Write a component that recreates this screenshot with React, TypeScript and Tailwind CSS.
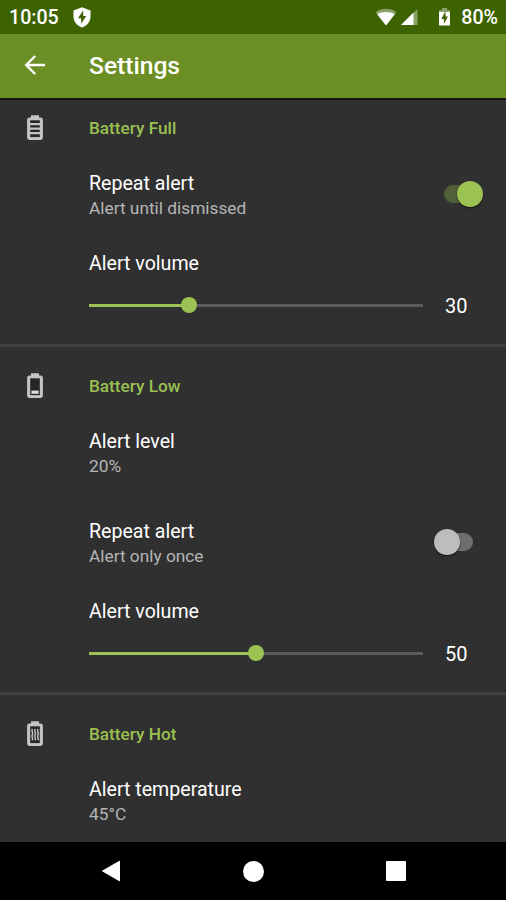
import type { ReactNode } from "react";

function BatteryIcon({ children }: { children: ReactNode }) {
  return (
    <svg width="18" height="28" viewBox="0 0 18 28" className="ml-[26px] mr-[45px] shrink-0">
      <path
        d="M5 1.2h8v2.4h1.6a2.3 2.3 0 0 1 2.3 2.3v17.7a2.3 2.3 0 0 1-2.3 2.3H3.4a2.3 2.3 0 0 1-2.3-2.3V5.9a2.3 2.3 0 0 1 2.3-2.3H5z"
        fill="#c4c4c4"
      />
      <rect x="4.2" y="6.3" width="9.6" height="16.8" fill="#262626" />
      {children}
    </svg>
  );
}

function SectionHeader({ icon, title, first }: { icon: ReactNode; title: string; first?: boolean }) {
  return (
    <div className={`flex items-center ${first ? "h-14" : "h-[67px] pt-[11px]"}`}>
      {icon}
      <h2 className="pt-0.5 text-[17.2px] font-medium text-[#9bc052]">{title}</h2>
    </div>
  );
}

function Row({ title, summary, className, children }: {
  title: string;
  summary: string;
  className: string;
  children?: ReactNode;
}) {
  return (
    <div className={`flex justify-between pl-[89px] ${className}`}>
      <div className="pt-4">
        <p className="text-[19.6px] leading-6 text-white">{title}</p>
        <p className="text-[17.3px] leading-[25px] text-[#b5b5b5]">{summary}</p>
      </div>
      {children}
    </div>
  );
}

function Toggle({ on }: { on?: boolean }) {
  return on ? (
    <div className="mr-[23px] mt-[25px] flex h-[26px] w-[39px] items-center">
      <div className="h-[18px] w-7 shrink-0 rounded-full bg-[#516038]" />
      <div className="-ml-[15px] size-[26px] shrink-0 rounded-full bg-[#9cc254] shadow-[0_1px_2px_rgba(0,0,0,0.6)]" />
    </div>
  ) : (
    <div className="mr-[32px] mt-[25px] flex h-[26px] w-10 items-center">
      <div className="z-10 size-[26px] shrink-0 rounded-full bg-[#bdbdbd] shadow-[0_1px_2px_rgba(0,0,0,0.6)]" />
      <div className="-ml-[15px] h-[18px] w-[28px] shrink-0 rounded-full bg-[#6e6e6e]" />
    </div>
  );
}

function VolumeSlider({ value }: { value: number }) {
  return (
    <div className="h-28 pl-[89px] pt-5">
      <p className="text-[19.6px] leading-6 text-white">Alert volume</p>
      <div className="mt-[15px] flex h-[28px] items-center">
        <div className="flex w-[334px] items-center">
          <div className="h-[3px] bg-[#9cc254]" style={{ width: `${value}%` }} />
          <div className="z-10 -mx-2 size-4 shrink-0 rounded-full bg-[#9cc254]" />
          <div className="h-[3px] flex-1 bg-[#5d5d5d]" />
        </div>
        <span className="ml-[22px] pt-0.5 text-[20px] text-white">{value}</span>
      </div>
    </div>
  );
}

function StatusBar() {
  return (
    <div className="flex h-[34px] shrink-0 items-center bg-[#3d6200] pl-[9px] pr-2 text-[19.6px] font-medium text-white">
      <span className="w-[51px] pt-px">10:05</span>
      <svg width="18" height="21" viewBox="0 0 18 21" className="ml-[13px]">
        <path d="M9 0.3 17.5 3.6v6.1c0 4.9-3.5 9-8.5 10.8C4 18.7.5 14.6.5 9.7V3.6z" fill="#fff" />
        <path d="M10.2 3.6 5 11.3h3.2v5.4l5-7.8h-3z" fill="#3d6200" />
      </svg>
      <div className="ml-auto flex items-center">
        <svg width="22" height="18" viewBox="0 0 22 18">
          <path d="M11 17.5.6 4.2C6.3-.4 15.7-.4 21.4 4.2z" fill="#fff" fillOpacity="0.4" />
          <path d="M11 17.5 2.2 6.3c4.7-3.2 12.9-3.2 17.6 0z" fill="#fff" />
        </svg>
        <svg width="18" height="18" viewBox="0 0 18 18" className="ml-[3px]">
          <path d="M17.5 1v16H1z" fill="#fff" fillOpacity="0.4" />
          <path d="M13.5 4.5V17H1z" fill="#fff" />
        </svg>
        <svg width="13" height="20" viewBox="0 0 13 20" className="ml-[20px]">
          <path d="M4 1h5v2h3v4H1V3h3z" fill="#fff" fillOpacity="0.4" />
          <path d="M1 5h11v13.5H1z" fill="#fff" />
          <path d="M7.5 4 3.4 12h2.5v5l4-7.5H7.5z" fill="#3d6200" />
        </svg>
        <span className="ml-[10px] pt-px">80%</span>
      </div>
    </div>
  );
}

export default function App() {
  return (
    <div className="flex h-[900px] w-[506px] flex-col overflow-hidden bg-[#303030] font-['Roboto',sans-serif]">
      <StatusBar />

      <header className="flex h-[66px] shrink-0 items-center border-b-2 border-[#171717] bg-[#6b8f24]">
        <svg width="22" height="22" viewBox="0 0 22 22" className="-mt-0.5 ml-6 mr-[43px]">
          <path d="M21 11H2.5M11.2 2 2.2 11l9 9" fill="none" stroke="#fff" strokeWidth="2.4" />
        </svg>
        <h1 className="text-[24.6px] font-medium text-white">Settings</h1>
      </header>

      <main className="min-h-0 flex-1 overflow-hidden">
        <section>
          <SectionHeader
            first
            title="Battery Full"
            icon={
              <BatteryIcon>
                <path d="M4 10.1h10M4 14.6h10M4 19.1h10" stroke="#c4c4c4" strokeWidth="2.2" />
              </BatteryIcon>
            }
          />
          <Row title="Repeat alert" summary="Alert until dismissed" className="h-[76px]">
            <Toggle on />
          </Row>
          <VolumeSlider value={30} />
        </section>

        <section className="border-t-[3px] border-[#414141]">
          <SectionHeader
            title="Battery Low"
            icon={
              <BatteryIcon>
                <rect x="5.4" y="18.6" width="7.2" height="3.2" fill="#e0e0e0" />
              </BatteryIcon>
            }
          />
          <Row title="Alert level" summary="20%" className="h-[90px]" />
          <Row title="Repeat alert" summary="Alert only once" className="h-[76px]">
            <Toggle />
          </Row>
          <VolumeSlider value={50} />
        </section>

        <section className="border-t-[3px] border-[#414141]">
          <SectionHeader
            title="Battery Hot"
            icon={
              <BatteryIcon>
                <path
                  d="M6.4 9c-1.5 2 1.2 3.5 0 5.7s.8 3.3 0 5.5M9.2 9c-1.5 2 1.2 3.5 0 5.7s.8 3.3 0 5.5M12 9c-1.5 2 1.2 3.5 0 5.7s.8 3.3 0 5.5"
                  fill="none"
                  stroke="#c4c4c4"
                  strokeWidth="1.5"
                />
              </BatteryIcon>
            }
          />
          <Row title="Alert temperature" summary="45°C" className="h-[90px]" />
        </section>
      </main>

      {/* System navigation */}
      <nav className="flex h-[58px] shrink-0 items-center bg-black pl-[101px]">
        <svg width="20" height="22" viewBox="0 0 20 22">
          <path d="M18.3 1.5v19L1.8 11z" fill="#fff" stroke="#fff" strokeWidth="1.4" strokeLinejoin="round" />
        </svg>
        <div className="ml-[122px] size-[21px] rounded-full bg-white" />
        <div className="ml-[122px] size-5 rounded-[1px] bg-white" />
      </nav>
    </div>
  );
}
